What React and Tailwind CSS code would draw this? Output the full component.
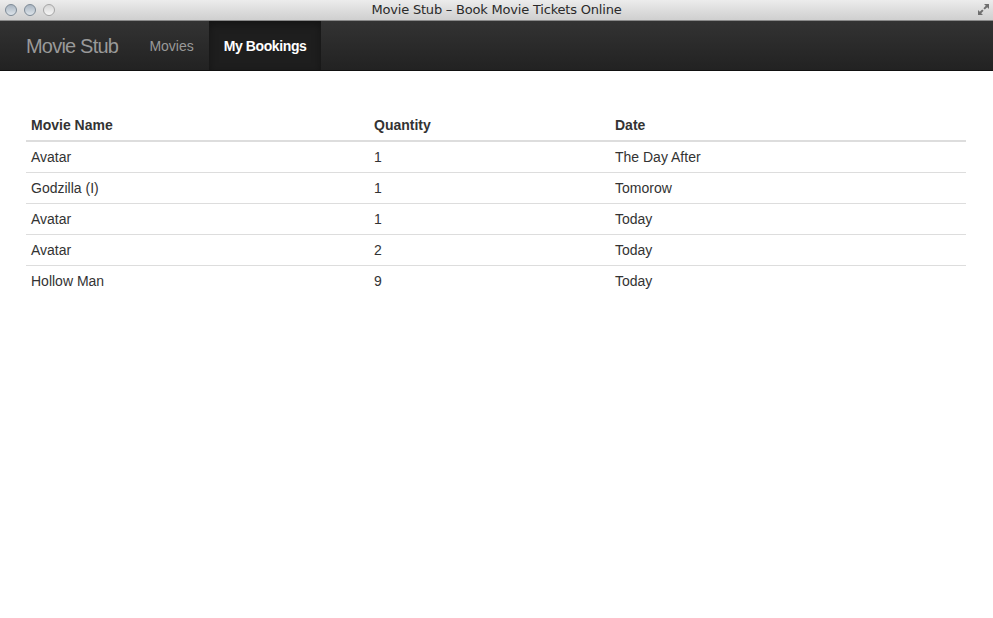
const bookings = [
  { name: "Avatar", qty: 1, date: "The Day After" },
  { name: "Godzilla (I)", qty: 1, date: "Tomorow" },
  { name: "Avatar", qty: 1, date: "Today" },
  { name: "Avatar", qty: 2, date: "Today" },
  { name: "Hollow Man", qty: 9, date: "Today" },
];

function TitleBar() {
  return (
    <div className="relative flex h-[21px] items-center justify-center bg-gradient-to-b from-[#ececec] to-[#cfcfcf] border-b border-[#8a8a8a]">
      {/* traffic lights */}
      <div className="absolute left-[5px] top-[4px] flex gap-[7px]">
        <span className="h-[12px] w-[12px] rounded-full border border-[#7d8a96] bg-gradient-to-b from-[#aab6c2] to-[#dde4ea]" />
        <span className="h-[12px] w-[12px] rounded-full border border-[#7d8a96] bg-gradient-to-b from-[#aab6c2] to-[#dde4ea]" />
        <span className="h-[12px] w-[12px] rounded-full border border-[#a5a5a5] bg-gradient-to-b from-[#d6d6d6] to-[#f6f6f6]" />
      </div>
      <span className="text-[13px] text-[#2a2a2a] font-['DejaVu_Sans','Liberation_Sans',sans-serif] tracking-[-0.2px]">
        Movie Stub – Book Movie Tickets Online
      </span>
      <svg className="absolute right-[3px] top-[3px]" width="13" height="13" viewBox="0 0 13 13">
        <path d="M7 1h5v5l-1.8-1.8-2.4 2.4-1.4-1.4 2.4-2.4z" fill="#6f6f6f" />
        <path d="M6 12H1V7l1.8 1.8 2.4-2.4 1.4 1.4-2.4 2.4z" fill="#6f6f6f" />
      </svg>
    </div>
  );
}

export default function App() {
  return (
    <div className="min-h-[618px] bg-white font-['Liberation_Sans',Arial,sans-serif]">
      <TitleBar />

      {/* navbar */}
      <nav className="flex h-[50px] items-stretch bg-gradient-to-b from-[#333333] to-[#222222] border-b border-[#111111] pl-[26px]">
        <span className="flex items-center pr-[16px] text-[20px] tracking-[-0.8px] text-[#999999]">Movie Stub</span>
        <span className="flex w-[75px] items-center justify-center pt-[2px] text-[14px] text-[#999999]">Movies</span>
        <span className="flex w-[112px] items-center justify-center pt-[2px] text-[14px] font-bold tracking-[-0.4px] text-white bg-[#1e1e1e] shadow-[inset_0_3px_8px_rgba(0,0,0,0.35)]">
          My Bookings
        </span>
      </nav>

      {/* bookings table */}
      <main className="px-[26px] pt-[39px]">
        <table className="w-[940px] border-collapse text-[14px] leading-[20px] text-[#333333]">
          <thead>
            <tr className="border-b-2 border-[#dddddd]">
              <th className="w-[343px] px-[5px] pt-[5px] pb-[5px] text-left font-bold">Movie Name</th>
              <th className="w-[241px] px-[5px] pt-[5px] pb-[5px] text-left font-bold">Quantity</th>
              <th className="px-[5px] pt-[5px] pb-[5px] text-left font-bold">Date</th>
            </tr>
          </thead>
          <tbody>
            {bookings.map((b, i) => (
              <tr key={i} className={i > 0 ? "border-t border-[#dddddd]" : ""}>
                <td className="px-[5px] py-[5px]">{b.name}</td>
                <td className="px-[5px] py-[5px]">{b.qty}</td>
                <td className="px-[5px] py-[5px]">{b.date}</td>
              </tr>
            ))}
          </tbody>
        </table>
      </main>
    </div>
  );
}
